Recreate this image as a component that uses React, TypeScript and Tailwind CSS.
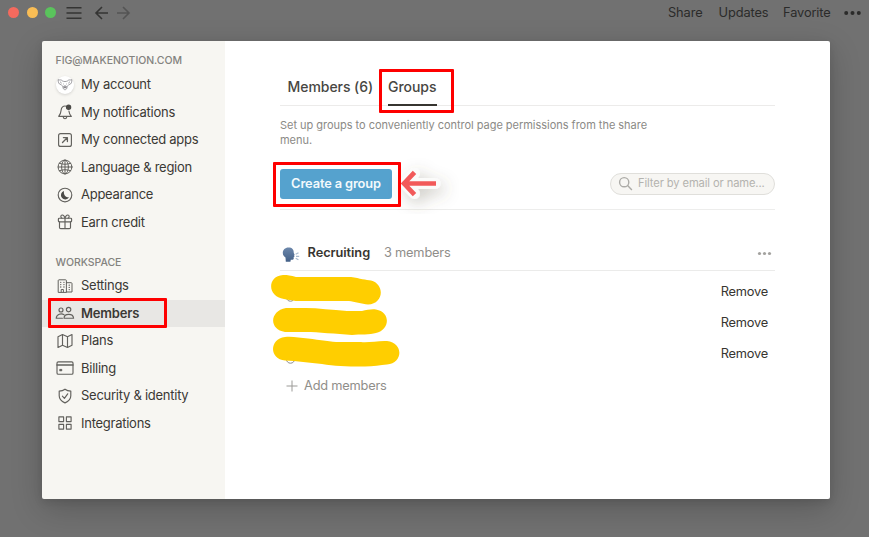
import type { ReactNode } from "react";

function Icon({ children, w = 18 }: { children: ReactNode; w?: number }) {
  return (
    <svg
      width={w}
      height="18"
      viewBox={`0 0 ${w} 18`}
      fill="none"
      stroke="#62615d"
      strokeWidth="1.15"
      strokeLinecap="round"
      strokeLinejoin="round"
      className="shrink-0"
    >
      {children}
    </svg>
  );
}

const avatar = (
  <span className="flex size-[18px] items-center justify-center rounded-full bg-white shadow-[0_1px_3px_rgba(0,0,0,0.14)]">
    <svg width="16" height="14" viewBox="0 0 16 14" fill="none" stroke="#88878b" strokeWidth="0.8" strokeLinejoin="round">
      <path d="M5.200 2.800C4 1 2.600 2.600 1.200 1.600 1 3.500 1.500 6.600 4.200 6.600M10.800 2.800C12 1 13.400 2.600 14.800 1.600 15 3.500 14.500 6.600 11.800 6.600" />
      <path d="M5.200 2.800c1.800 1 3.800 1 5.600 0M4.200 6.600c.8 1 1.500 1.500 2 3M11.800 6.600c-.8 1-1.500 1.500-2 3M3 3.700l1.700 1.500M13 3.700l-1.700 1.500M6.300 6h.7M9 6h.7" />
      <path d="M6.200 9.300c0-2 3.600-2 3.600 0 .5 3.200-4.100 3.200-3.600 0z" />
      <path d="M7.300 8.700h1.400v1.200H7.300z" fill="#66656a" />
    </svg>
  </span>
);

const bell = (
  <Icon>
    <path d="M10.200 3.200C7.200 2.400 5.300 4.600 5.100 7.200 4.900 10 4.400 11.200 2.700 13.400h12.600C13.800 11.500 13.100 10 12.900 8M7.300 14.200c.3 2 3.100 2 3.400 0" />
    <circle cx="12.600" cy="4.200" r="2.100" fill="#4b4a47" stroke="#4b4a47" />
  </Icon>
);
const arrowBox = (
  <Icon>
    <rect x="2.600" y="2.600" width="12.800" height="12.800" rx="2" />
    <path d="M6.500 11.500l4.700-4.700M7.400 6.600h4v4" strokeWidth="1.300" />
  </Icon>
);
const globe = (
  <Icon>
    <g strokeWidth="1">
      <circle cx="9" cy="9" r="6.900" />
      <ellipse cx="9" cy="9" rx="3.400" ry="6.900" />
      <path d="M9 2.100v13.800M2.100 9h13.800M3.300 5.300c3.600 1.300 7.800 1.300 11.400 0M3.300 12.700c3.600-1.300 7.800-1.300 11.400 0" />
    </g>
  </Icon>
);
const moon = (
  <Icon>
    <circle cx="9" cy="9" r="6.800" />
    <path d="M8 5a4.300 4.300 0 1 0 5 6.200C10 12 7.200 8.800 8 5z" fill="#4b4a47" stroke="none" />
  </Icon>
);
const gift = (
  <Icon>
    <rect x="2.400" y="5.200" width="13.200" height="3.600" rx="0.800" />
    <path d="M3.500 8.800v5.600c0 .8.400 1.200 1.200 1.200h8.600c.8 0 1.200-.4 1.200-1.200V8.800M9 5.200v10.400M9 5.200C8.400 3 7.300 1.800 6 2 4.400 2.300 4.500 4.800 6 5.200M9 5.200C9.600 3 10.700 1.800 12 2c1.600.3 1.500 2.800 0 3.200" />
  </Icon>
);
const building = (
  <Icon>
    <path d="M2.200 15V3.600c0-.5.300-.8.800-.8h6.600c.5 0 .8.300.8.800V15zM10.400 5.700h4.800c.5 0 .8.300.8.800V15h-5.600M5.200 15v-2.500h2.200V15" strokeWidth="1" />
    <path d="M4.700 5.300h.1M7.900 5.300h.1M4.700 7.600h.1M7.900 7.600h.1M4.700 10h.1M7.900 10h.1M13.200 8.200h.1M13.200 10.400h.1M13.200 12.600h.1" strokeWidth="1.300" />
  </Icon>
);
const people = (
  <Icon w={20}>
    <circle cx="6" cy="6" r="2" />
    <circle cx="13.600" cy="5.600" r="2.200" />
    <path d="M9 10.700C6.500 9 1.500 10 1.200 14.200h6.200M9 14.200c.2-5.200 9.200-5.200 9.600 0z" />
  </Icon>
);
const map = (
  <Icon>
    <path d="M2 4.700l4.500-2.200 5 2.200L16 2.500v10.800l-4.500 2.200-5-2.200L2 15.500zM6.500 2.500v10.800M11.500 4.700v10.800" />
  </Icon>
);
const card = (
  <Icon>
    <rect x="1" y="2.800" width="16" height="12.400" rx="1.300" />
    <path d="M1 5.900h16" strokeWidth="1.500" />
    <rect x="4" y="10.400" width="1.800" height="1.400" fill="#4b4a47" strokeWidth="0.800" />
  </Icon>
);
const shield = (
  <Icon>
    <path d="M9 2.200c1.500 1.100 3.500 1.800 5.800 1.900v4.700c0 3.400-2.300 5.600-5.800 7.100-3.500-1.500-5.800-3.700-5.800-7.100V4.100C5.500 4 7.500 3.300 9 2.200z" />
    <path d="M6.400 9.200l2 2.200 3.300-4.600" />
  </Icon>
);
const tiles = (
  <Icon>
    <rect x="2.900" y="2.900" width="4.700" height="4.700" />
    <rect x="10.400" y="2.900" width="4.700" height="4.700" />
    <rect x="2.900" y="10.400" width="4.700" height="4.700" />
    <rect x="10.400" y="10.400" width="4.700" height="4.700" />
  </Icon>
);

function NavItem({ icon, label, active = false }: { icon: ReactNode; label: string; active?: boolean }) {
  return (
    <div className={`relative flex h-[27.5px] items-center pl-[12.500px] ${active ? "bg-[#e8e7e4]" : ""}`}>
      <span className="flex w-[20px] justify-center">{icon}</span>
      <span
        className={`ml-[6.500px] whitespace-nowrap text-[13px] text-[#3b3935] ${active ? "font-semibold tracking-[-0.2px]" : "tracking-[-0.26px]"}`}
      >
        {label}
      </span>
      {active && <span className="absolute -top-[2px] left-[6px] h-[30px] w-[119px] rounded-[1px] border-[3px] border-[#fe0000]" />}
    </div>
  );
}

function Caption({ children }: { children: ReactNode }) {
  return (
    <div className="h-[14px] pl-[13.500px] text-[10.500px] font-medium leading-[16px] tracking-[-0.04px] text-[#83827e]">
      {children}
    </div>
  );
}

function Sidebar() {
  return (
    <aside className="w-[183px] shrink-0 bg-[#f7f6f2] pt-[12px]">
      <Caption>FIG@MAKENOTION.COM</Caption>
      <nav className="pt-[4px]">
        <NavItem icon={avatar} label="My account" />
        <NavItem icon={bell} label="My notifications" />
        <NavItem icon={arrowBox} label="My connected apps" />
        <NavItem icon={globe} label="Language & region" />
        <NavItem icon={moon} label="Appearance" />
        <NavItem icon={gift} label="Earn credit" />
      </nav>
      <div className="pt-[19px]">
        <Caption>WORKSPACE</Caption>
      </div>
      <nav className="pt-[3px]">
        <NavItem icon={building} label="Settings" />
        <NavItem icon={people} label="Members" active />
        <NavItem icon={map} label="Plans" />
        <NavItem icon={card} label="Billing" />
        <NavItem icon={shield} label="Security & identity" />
        <NavItem icon={tiles} label="Integrations" />
      </nav>
    </aside>
  );
}

function TopBar() {
  return (
    <header className="flex h-[41px] items-start justify-between text-[#2b2b2a]">
      <div className="flex h-[25px] items-center pl-[8px]">
        <span className="size-[11px] rounded-full bg-[#f46a5e]" />
        <span className="ml-[7.500px] size-[11px] rounded-full bg-[#f9bd55]" />
        <span className="ml-[7px] size-[11px] rounded-full bg-[#5ac35c]" />
        <svg className="ml-[10.500px]" width="66" height="18" viewBox="0 0 66 18" fill="none" stroke="#343433" strokeWidth="1.600">
          <path d="M0.500 3.700h15M0.500 9h15M0.500 14.200h15" />
          <path d="M36 3l-6 6 6 6M30 9h12" />
          <path d="M57 3l6 6-6 6M63 9H51" stroke="#545454" />
        </svg>
      </div>
      <div className="flex h-[25px] items-center pr-[8px] text-[12.800px] tracking-[-0.1px]">
        <span className="w-[50.500px]">Share</span>
        <span className="w-[64.500px]">Updates</span>
        <span className="w-[61px]">Favorite</span>
        <svg width="17" height="6" viewBox="0 0 17 6" fill="#2b2b2a">
          <circle cx="2.200" cy="3" r="2" />
          <circle cx="8.500" cy="3" r="2" />
          <circle cx="14.800" cy="3" r="2" />
        </svg>
      </div>
    </header>
  );
}

function SpeakingHead() {
  return (
    <svg width="18" height="18" viewBox="0 0 18 18">
      <defs>
        <linearGradient id="head" x1="0" y1="0" x2="0" y2="1">
          <stop offset="0" stopColor="#6c87ab" />
          <stop offset="1" stopColor="#436087" />
        </linearGradient>
      </defs>
      <path
        d="M6.500 1.500C3 1.500.8 3.900.8 7c0 2.100 1.200 3.500 2.700 4.600l.3 4.200h4.600l.4-2h1.800c1 0 1.200-.6 1.100-1.600l-.1-1 .9-.5-.4-1 .5-.9-.8-1.900C11.800 3.500 10.200 1.500 6.500 1.500z"
        fill="url(#head)"
      />
      <path d="M13.700 8.300l2.800-1.600M14 10.300h3.200M13.700 12.200l2.700 1.500" stroke="#a9bace" strokeWidth="1.200" />
    </svg>
  );
}

function MemberRow({ path, mark }: { path: string; mark: boolean }) {
  return (
    <div className="relative flex h-[31px] items-center justify-end pr-[7px] text-[12.800px] tracking-[-0.2px] text-[#373530]">
      <svg className="absolute -left-[10px] -top-[4px]" width="140" height="40" viewBox="0 0 140 40">
        {mark && <circle cx="20.500" cy="25" r="4.200" fill="none" stroke="#8d8d8d" />}
        <path d={path} fill="#ffce00" />
      </svg>
      Remove
    </div>
  );
}

function Content() {
  return (
    <main className="flex w-[605px] flex-col bg-white pl-[55px] pr-[55px] pt-[28px]">
      <div className="flex h-[37px] border-b border-[#ecebea] text-[14px] font-medium leading-[36px] tracking-[-0.05px] text-[#474642]">
        <span className="w-[108px] pl-[7.500px]">Members (6)</span>
        <span className="relative h-[37px] w-[49px] whitespace-nowrap border-b-2 border-[#373530]">
          Groups
          <span className="absolute -left-[9px] top-0 h-[44px] w-[75px] rounded-[1px] border-[3px] border-[#fe0000]" />
        </span>
      </div>
      <p className="mt-[12px] h-[30px] w-[390px] text-[11px] leading-[15px] tracking-[-0.025px] text-[#8b8a86]">
        Set up groups to conveniently control page permissions from the share menu.
      </p>
      <div className="flex h-[62px] items-center justify-between border-b border-[#ededec] pb-[2px] pt-[12px]">
        <button className="relative h-[30px] w-[112px] rounded-[3px] bg-[#55a2ce] text-[12.800px] font-semibold tracking-[-0.12px] text-[#f3f9fc]">
          Create a group
          <svg className="absolute left-[100px] -top-[28px]" width="110" height="90" viewBox="0 0 110 90" fill="none">
            <defs>
              <filter id="arrowShadow" x="-60%" y="-90%" width="240%" height="290%">
                <feDropShadow dx="4" dy="5" stdDeviation="8" floodColor="#58523c" floodOpacity="0.3" />
              </filter>
            </defs>
            <path d="M55 42.500H25M34.500 32.500L25 42.500l9.500 10" stroke="#fbfbfa" strokeWidth="11" strokeLinejoin="round" strokeLinecap="round" filter="url(#arrowShadow)" />
            <path d="M56 42.500H24M34.500 31.300L24 42.500l10.500 11.200" stroke="#f25a5a" strokeWidth="4.700" />
          </svg>
          <span className="absolute -left-[7px] -top-[7px] h-[45px] w-[128px] rounded-[1px] border-[3px] border-[#fe0000]" />
        </button>
        <div className="flex h-[22px] w-[165px] items-center rounded-full border border-[#e0dfdb] bg-[#f7f6f3] pl-[7px] text-[11.200px] tracking-[-0.12px] text-[#b4b3af]">
          <svg width="15" height="15" viewBox="0 0 15 15" fill="none" stroke="#acaba7" strokeWidth="1.400">
            <circle cx="6.200" cy="6.200" r="4.600" />
            <path d="M9.600 9.600l4.300 4.300" />
          </svg>
          <span className="ml-[5px] whitespace-nowrap">Filter by email or name...</span>
        </div>
      </div>
      <section className="pt-[25px]">
        <div className="flex h-[36px] items-center border-b border-[#ebebea] pt-px text-[12.800px]">
          <span className="mt-[3px] ml-[2px]">
            <SpeakingHead />
          </span>
          <span className="ml-[7.500px] w-[76.500px] font-semibold tracking-[-0.06px] text-[#373530]">Recruiting</span>
          <span className="tracking-[-0.2px] text-[#8f8e8a]">3 members</span>
          <svg className="ml-auto mr-[3.500px]" width="15" height="5" viewBox="0 0 15 5" fill="#a3a29f">
            <circle cx="2.500" cy="2.500" r="1.600" />
            <circle cx="7.500" cy="2.500" r="1.600" />
            <circle cx="12.500" cy="2.500" r="1.600" />
          </svg>
        </div>
        <div className="pt-[5px]">
          <MemberRow
            mark
            path="M13 3C16 2.800 20 3.300 26 5H81C90 6.500 96 8 101 8.500C115 12 114 32 98 32.500C92 32 84 29.500 79 29H32C26 29.500 20 28 14 27C-3 25 -3 4 13 3Z"
          />
          <MemberRow
            mark={false}
            path="M16 5H36C48 5 62 7 77 8H92C97 7 101 6 106 6.500C121 9 120 27 106 30C100 32 90 31 82 32C66 31 48 29 36 29H15C-1 27 -1 8 16 5Z"
          />
          <MemberRow
            mark
            path="M15 3C22 2 30 4 38 4.500C50 6 62 8 69 8H91C98 9 108 6.500 117 7C134 9 133 29 117 30.500C110 31 101 33 92 32.500C76 32.500 64 32 52 30C39 29 27 27 15 26.500C-1 25 -1 5 15 3Z"
          />
        </div>
        <div className="flex h-[33px] items-center pl-[6px] text-[12.800px] tracking-[-0.2px] text-[#8f8e8a]">
          <svg width="12" height="12" viewBox="0 0 12 12" stroke="#9b9a97" strokeWidth="1">
            <path d="M6 .5v11M.5 6h11" />
          </svg>
          <span className="ml-[6px]">Add members</span>
        </div>
      </section>
    </main>
  );
}

export default function App() {
  return (
    <div className="h-[537px] w-[869px] overflow-hidden bg-[#717171] font-['Inter','Liberation_Sans',sans-serif]">
      <TopBar />
      <div className="ml-[42px] flex h-[458px] w-[788px] rounded-[2px] shadow-[0_10px_32px_rgba(0,0,0,0.2),0_3px_8px_rgba(0,0,0,0.1)] *:first:rounded-l-[2px] *:last:rounded-r-[2px]">
        <Sidebar />
        <Content />
      </div>
    </div>
  );
}
